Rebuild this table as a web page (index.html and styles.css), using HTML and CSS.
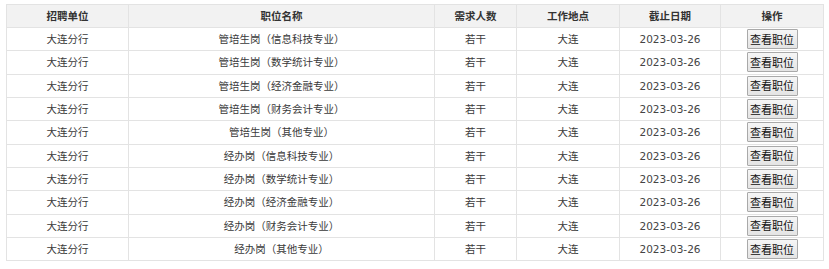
FILE: index.html
```html
<!DOCTYPE html>
<html lang="zh-CN">
<head>
<meta charset="utf-8">
<title>职位列表</title>
<link rel="stylesheet" href="styles.css">
</head>
<body>
<table class="jobs">
  <colgroup>
    <col class="c1"><col class="c2"><col class="c3"><col class="c4"><col class="c5"><col class="c6">
  </colgroup>
  <thead>
    <tr class="head">
      <th>招聘单位</th><th>职位名称</th><th>需求人数</th><th>工作地点</th><th>截止日期</th><th>操作</th>
    </tr>
  </thead>
  <tbody>
    <tr class="row"><td>大连分行</td><td>管培生岗（信息科技专业）</td><td>若干</td><td>大连</td><td class="num">2023-03-26</td><td><button class="btn">查看职位</button></td></tr>
    <tr class="row"><td>大连分行</td><td>管培生岗（数学统计专业）</td><td>若干</td><td>大连</td><td class="num">2023-03-26</td><td><button class="btn">查看职位</button></td></tr>
    <tr class="row"><td>大连分行</td><td>管培生岗（经济金融专业）</td><td>若干</td><td>大连</td><td class="num">2023-03-26</td><td><button class="btn">查看职位</button></td></tr>
    <tr class="row"><td>大连分行</td><td>管培生岗（财务会计专业）</td><td>若干</td><td>大连</td><td class="num">2023-03-26</td><td><button class="btn">查看职位</button></td></tr>
    <tr class="row"><td>大连分行</td><td>管培生岗（其他专业）</td><td>若干</td><td>大连</td><td class="num">2023-03-26</td><td><button class="btn">查看职位</button></td></tr>
    <tr class="row"><td>大连分行</td><td>经办岗（信息科技专业）</td><td>若干</td><td>大连</td><td class="num">2023-03-26</td><td><button class="btn">查看职位</button></td></tr>
    <tr class="row"><td>大连分行</td><td>经办岗（数学统计专业）</td><td>若干</td><td>大连</td><td class="num">2023-03-26</td><td><button class="btn">查看职位</button></td></tr>
    <tr class="row"><td>大连分行</td><td>经办岗（经济金融专业）</td><td>若干</td><td>大连</td><td class="num">2023-03-26</td><td><button class="btn">查看职位</button></td></tr>
    <tr class="row"><td>大连分行</td><td>经办岗（财务会计专业）</td><td>若干</td><td>大连</td><td class="num">2023-03-26</td><td><button class="btn">查看职位</button></td></tr>
    <tr class="row"><td>大连分行</td><td>经办岗（其他专业）</td><td>若干</td><td>大连</td><td class="num">2023-03-26</td><td><button class="btn">查看职位</button></td></tr>
  </tbody>
</table>
</body>
</html>
```

FILE: styles.css
```css
html, body {
  margin: 0;
  padding: 0;
  background: #fff;
}
body {
  padding: 4px 6px;
  font-family: "Noto Sans CJK SC", "Noto Sans", sans-serif;
  font-size: 10.5px;
  color: #3a3a3a;
}
.jobs {
  border-collapse: collapse;
  width: 817px;
  table-layout: fixed;
}
.c1 { width: 122px; }
.c2 { width: 306px; }
.c3 { width: 82px; }
.c4 { width: 103px; }
.c5 { width: 101px; }
.c6 { width: 103px; }
.jobs th, .jobs td {
  border: 1px solid #e3e3e3;
  text-align: center;
  padding: 0;
  vertical-align: middle;
  line-height: 16px;
}
.jobs th {
  background: #f2f2f2;
  font-weight: bold;
  color: #333;
}
.head { height: 23px; }
.row { height: 23.33px; }
.num {
  font-family: "DejaVu Sans", "Noto Sans", sans-serif;
  font-size: 10.5px;
  color: #444;
}
.btn {
  display: inline-block;
  width: 51px;
  height: 20px;
  padding: 0;
  margin: 0;
  border: 1px solid #a9a9a9;
  border-radius: 1px;
  background: linear-gradient(#f6f6f6, #e4e4e4);
  font-family: "Noto Sans CJK SC", sans-serif;
  font-size: 11px;
  line-height: 17px;
  color: #111;
  vertical-align: middle;
}
```
